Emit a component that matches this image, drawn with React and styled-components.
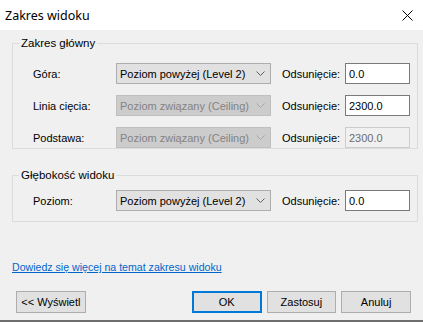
import styled, { createGlobalStyle } from 'styled-components'

const Global = createGlobalStyle`
  html, body { margin: 0; padding: 0; background: #f0f0f0; }
  * { box-sizing: border-box; }
`

let Window = styled.div`
  width: 423px;
  height: 322px;
  background: #f0f0f0;
  border-bottom: 2px solid #6e6e6e;
  display: flex;
  flex-direction: column;
  font-family: "Liberation Sans", Arial, sans-serif;
  font-size: 11px;
  color: #000;
  white-space: nowrap;
`
let TitleBar = styled.div`
  height: 30px;
  background: #fff;
  display: flex;
  align-items: center;
  justify-content: space-between;
  padding: 0 10px 0 5px;
  font-family: "Noto Sans", sans-serif;
  font-size: 12.5px;
  flex-shrink: 0;
`
let Body = styled.div`
  padding: 5px 5px 0 12px;
  display: flex;
  flex-direction: column;
  flex: 1;
`
let Group = styled.fieldset`
  margin: ${p => p.$top || 0}px 0 0 0;
  padding: ${p => p.$padTop}px 0 ${p => p.$padBottom}px 20px;
  border: 1px solid #dcdcdc;
  min-width: 0;
  display: flex;
  flex-direction: column;
  gap: 11px;
`
let Legend = styled.legend`
  margin-left: -14px;
  padding: 0 2px;
  line-height: 16px;
  font-size: 11.5px;
`
let Row = styled.div`
  display: flex;
  align-items: center;
  height: 21px;
`
let Label = styled.span`
  width: ${p => p.$w}px;
  margin-left: ${p => p.$ml || 0}px;
  flex-shrink: 0;
`
let Select = styled.div`
  width: 155px;
  height: 21px;
  display: flex;
  align-items: center;
  justify-content: space-between;
  padding: 0 5px 0 3px;
  background: ${p => (p.$disabled ? '#cccccc' : '#e1e1e1')};
  border: 1px solid ${p => (p.$disabled ? '#bfbfbf' : '#adadad')};
  color: ${p => (p.$disabled ? '#838383' : '#000')};
  flex-shrink: 0;
`
let Input = styled.div`
  width: 65px;
  height: 21px;
  display: flex;
  align-items: center;
  padding-left: 3px;
  background: ${p => (p.$disabled ? '#f0f0f0' : '#fff')};
  border: 1px solid ${p => (p.$disabled ? '#cccccc' : '#7a7a7a')};
  color: ${p => (p.$disabled ? '#6d6d6d' : '#000')};
`
let Link = styled.a`
  margin-top: 37px;
  color: #0066cc;
  text-decoration: underline;
  line-height: 16px;
  font-size: 10.6px;
  align-self: flex-start;
`
let ButtonBar = styled.div`
  margin-top: 16px;
  display: flex;
  padding: 0 7px 0 4px;
`
let Button = styled.div`
  width: 70px;
  height: 22px;
  display: flex;
  align-items: center;
  justify-content: center;
  background: #e1e1e1;
  border: ${p => (p.$primary ? '2px solid #0078d7' : '1px solid #adadad')};
  margin-left: ${p => p.$ml || 0}px;
`

const Chevron = ({ disabled }) => (
  <svg width="9" height="5" viewBox="0 0 9 5">
    <path d="M0.5 0.5 L4.5 4.5 L8.5 0.5" fill="none" stroke={disabled ? '#a8a8a8' : '#606060'} strokeWidth="1" />
  </svg>
)

const Close = () => (
  <svg width="11" height="11" viewBox="0 0 11 11">
    <path d="M0.5 0.5 L10.5 10.5 M10.5 0.5 L0.5 10.5" stroke="#000" strokeWidth="1" />
  </svg>
)

function LevelRow({ label, level, value, disabled, inputDisabled }) {
  return (
    <Row>
      <Label $w={83}>{label}</Label>
      <Select $disabled={disabled}>
        <span>{level}</span>
        <Chevron disabled={disabled} />
      </Select>
      <Label $w={63} $ml={11}>Odsunięcie:</Label>
      <Input $disabled={inputDisabled}>{value}</Input>
    </Row>
  )
}

export default function App() {
  return (
    <Window>
      <Global />
      <TitleBar>
        <span>Zakres widoku</span>
        <Close />
      </TitleBar>
      <Body>
        <Group $padTop={12} $padBottom={0}>
          <Legend>Zakres główny</Legend>
          <LevelRow label="Góra:" level="Poziom powyżej (Level 2)" value="0.0" />
          <LevelRow label="Linia cięcia:" level="Poziom związany (Ceiling)" value="2300.0" disabled />
          <LevelRow label="Podstawa:" level="Poziom związany (Ceiling)" value="2300.0" disabled inputDisabled />
        </Group>
        <Group $top={18} $padTop={7} $padBottom={10}>
          <Legend>Głębokość widoku</Legend>
          <LevelRow label="Poziom:" level="Poziom powyżej (Level 2)" value="0.0" />
        </Group>
        <Link>Dowiedz się więcej na temat zakresu widoku</Link>
        <ButtonBar>
          <Button>&lt;&lt; Wyświetl</Button>
          <Button $primary $ml={106}>OK</Button>
          <Button $ml={5}>Zastosuj</Button>
          <Button $ml={5}>Anuluj</Button>
        </ButtonBar>
      </Body>
    </Window>
  )
}
